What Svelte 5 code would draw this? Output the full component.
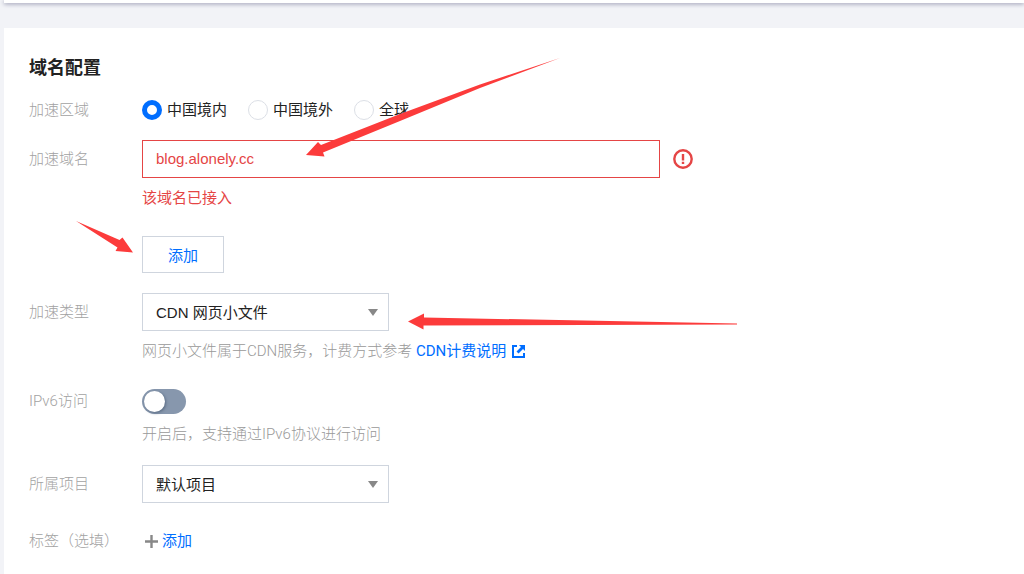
<script>
	let area = 'mainland'
	let domain = 'blog.alonely.cc'
	let type = 'web'
	let ipv6 = false
	let project = 'default'

	const areas = [
		{ value: 'mainland', text: '中国境内' },
		{ value: 'overseas', text: '中国境外' },
		{ value: 'global', text: '全球' }
	]
</script>

<div class="page">
	<div class="topbar"></div>

	<main class="card">
		<h1>域名配置</h1>

		<form on:submit|preventDefault>
			<div class="row short">
				<span class="label" id="area-label">加速区域</span>
				<div class="radios" role="radiogroup" aria-labelledby="area-label">
					{#each areas as item}
						<label class="radio">
							<input type="radio" name="area" value={item.value} bind:group={area} />
							{item.text}
						</label>
					{/each}
				</div>
			</div>

			<div class="row">
				<label class="label" for="domain">加速域名</label>
				<div>
					<div class="line">
						<input class="text" id="domain" type="text" bind:value={domain} aria-invalid="true" aria-describedby="domain-error" />
						<svg class="warn" width="20" height="20" viewBox="0 0 20 20" aria-hidden="true">
							<circle cx="10" cy="10" r="8.7" fill="none" stroke="#e54545" stroke-width="2.4"></circle>
							<path d="M8.800 5h2.400v6.500H8.800zM8.800 12.700h2.400v2.300H8.800z" fill="#e54545"></path>
						</svg>
					</div>
					<p class="error" id="domain-error">该域名已接入</p>
					<button type="button" class="btn">添加</button>
				</div>
			</div>

			<div class="row">
				<label class="label" for="type">加速类型</label>
				<div>
					<div class="select">
						<select id="type" bind:value={type}>
							<option value="web">CDN 网页小文件</option>
						</select>
					</div>
					<p class="hint">
						网页小文件属于CDN服务，计费方式参考
						<a href="#billing">CDN计费说明<svg width="13" height="13" viewBox="0 0 13 13" aria-hidden="true">
							<path d="M5 1H1v11h11V8" fill="none" stroke="currentColor" stroke-width="2"></path>
							<path d="M7 0h6v6l-2-2-4.500 4.500-2-2L9 2z" fill="currentColor"></path>
						</svg></a>
					</p>
				</div>
			</div>

			<div class="row">
				<label class="label" for="ipv6">IPv6访问</label>
				<div>
					<div class="line">
						<input class="switch" id="ipv6" type="checkbox" bind:checked={ipv6} />
					</div>
					<p class="hint near">开启后，支持通过IPv6协议进行访问</p>
				</div>
			</div>

			<div class="row">
				<label class="label" for="project">所属项目</label>
				<div class="select">
					<select id="project" bind:value={project}>
						<option value="default">默认项目</option>
					</select>
				</div>
			</div>

			<div class="row last">
				<span class="label">标签（选填）</span>
				<button type="button" class="add">
					<svg width="13" height="13" viewBox="0 0 13 13" aria-hidden="true">
						<path d="M6.500 0v13M0 6.500h13" stroke="#888" stroke-width="2.400"></path>
					</svg>
					添加
				</button>
			</div>
		</form>
	</main>

	<!-- red pointers drawn over the form -->
	<svg class="arrows" width="760" height="340" viewBox="0 0 760 340" aria-hidden="true">
		<path d="M560 58L480 84.500 400 114 321 145 318 142 306 155 324.500 156.500 323 152.500 400 121 480 88z"></path>
		<path d="M76 221L119.500 240 122.500 237.500 133 252.500 115.500 251 117.500 247.500z"></path>
		<path d="M737 323.500L424 317.500V313.500L408 321.500 423.500 329.500V325.500L737 324.500z"></path>
	</svg>
</div>

<style>
	:global(body) {
		margin: 0;
		background: #f2f3f7;
	}
	.page {
		position: relative;
		min-height: 100vh;
		display: flex;
		flex-direction: column;
		padding-left: 4px;
		box-sizing: border-box;
		overflow: hidden;
		color: #222;
		font-family: "Liberation Sans", "Noto Sans CJK SC", sans-serif;
		font-size: 15px;
		font-weight: 400;
	}
	.topbar {
		height: 3px;
		background: #fff;
		box-shadow: 0 1px 4px #8f90a8;
	}
	.card {
		flex: 1;
		margin-top: 25px;
		padding: 28px 25px 0;
		background: #fff;
	}
	h1 {
		margin: 0 0 20px;
		font-size: 18px;
		line-height: 24px;
		font-weight: 700;
	}
	form {
		display: flex;
		flex-direction: column;
		gap: 20px;
	}
	.row {
		display: grid;
		grid-template-columns: 113px 1fr;
		line-height: 38px;
	}
	.row.short {
		line-height: 20px;
		height: 20px;
	}
	.row.last {
		line-height: 36px;
	}
	.label {
		color: #a2a2a2;
		font-family: Roboto, "Noto Sans CJK SC", sans-serif;
		font-weight: 300;
	}
	.radios {
		display: flex;
		gap: 21px;
	}
	.radio {
		display: flex;
		align-items: center;
		gap: 5px;
	}
	.radio input {
		appearance: none;
		width: 20px;
		height: 20px;
		margin: 0;
		border: 1px solid #dcdfe6;
		border-radius: 50%;
		background: #fff;
	}
	.radio input:checked {
		border: 5px solid #006eff;
	}
	.line {
		display: flex;
		align-items: center;
		height: 38px;
	}
	.text {
		width: 518px;
		height: 38px;
		box-sizing: border-box;
		padding: 0 13px;
		border: 1px solid #e54545;
		border-radius: 0;
		color: #e54545;
		font: inherit;
		outline: none;
	}
	.warn {
		flex: none;
		margin-left: 13px;
	}
	.error,
	.hint {
		margin: 9px 0 0;
		line-height: 22px;
	}
	.error {
		color: #e54545;
	}
	.hint {
		color: #999;
		font-family: Roboto, "Noto Sans CJK SC", sans-serif;
		font-weight: 300;
	}
	.hint.near {
		margin-top: 3px;
	}
	.hint a {
		color: #006eff;
		font-weight: 400;
		text-decoration: none;
	}
	.hint a svg {
		margin-left: 6px;
		vertical-align: -2px;
	}
	.btn {
		display: block;
		width: 82px;
		height: 37px;
		margin-top: 27px;
		padding: 0;
		border: 1px solid #cfd5de;
		background: #fff;
		color: #006eff;
		font: inherit;
	}
	.select {
		position: relative;
		width: 247px;
		height: 38px;
	}
	.select::after {
		content: '';
		position: absolute;
		right: 11px;
		top: 16px;
		border: 5px solid transparent;
		border-top: 7px solid #888;
		border-bottom: 0;
		pointer-events: none;
	}
	select {
		appearance: none;
		display: block;
		width: 100%;
		height: 100%;
		padding: 0 30px 0 13px;
		border: 1px solid #cfd5de;
		border-radius: 0;
		background: #fff;
		color: #222;
		font: inherit;
	}
	.switch {
		appearance: none;
		width: 44px;
		height: 25px;
		margin: 0;
		padding: 2px;
		box-sizing: border-box;
		border-radius: 13px;
		background: #8797ad;
	}
	.switch::before {
		content: '';
		display: block;
		width: 21px;
		height: 21px;
		border-radius: 50%;
		background: #fff;
		box-shadow: 1px 1px 3px #586a82;
	}
	.switch:checked {
		background: #006eff;
	}
	.switch:checked::before {
		margin-left: auto;
	}
	.add {
		display: flex;
		align-items: center;
		justify-self: start;
		gap: 4px;
		height: 36px;
		padding: 0 3px;
		border: 0;
		background: none;
		color: #006eff;
		font: inherit;
	}
	.arrows {
		position: absolute;
		left: 0;
		top: 0;
		fill: #fc3b3b;
		pointer-events: none;
	}
</style>
